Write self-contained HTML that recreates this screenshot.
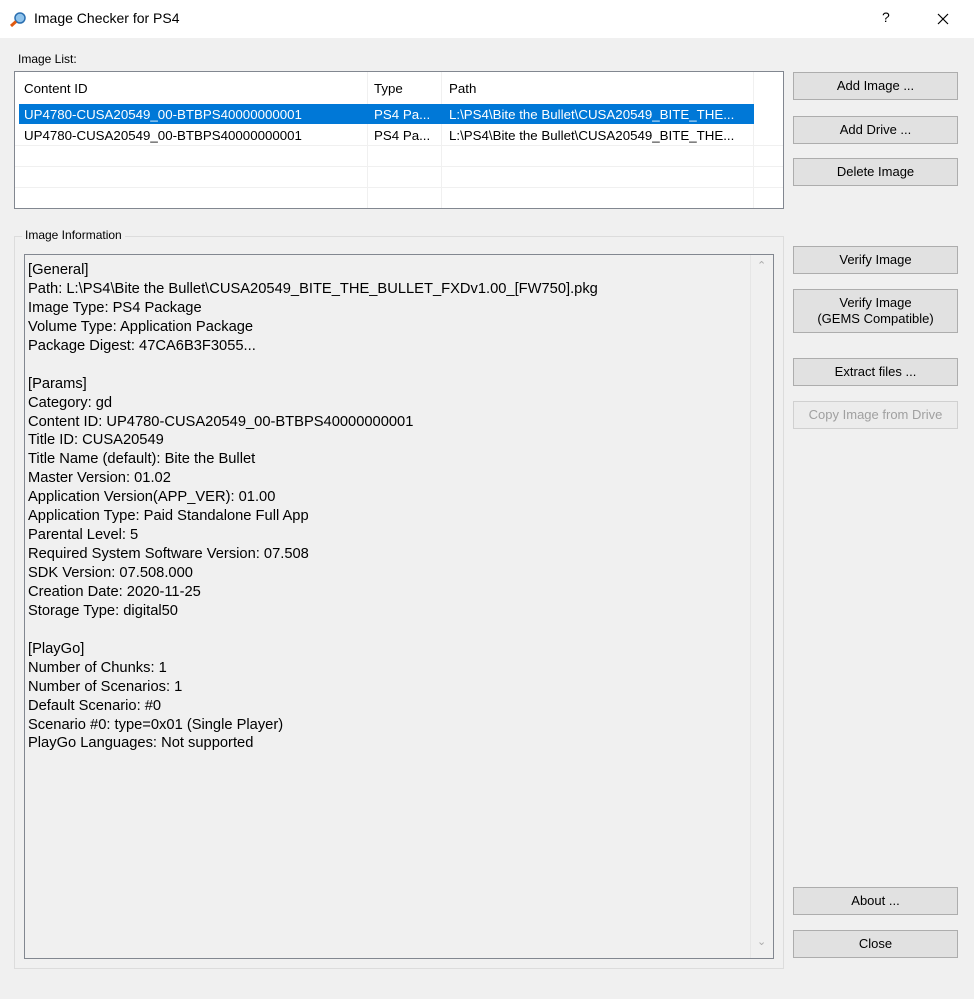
<!DOCTYPE html>
<html><head><style>
*{margin:0;padding:0;box-sizing:border-box}
body{width:974px;height:999px;background:#f0f0f0;font-family:"Liberation Sans",sans-serif;font-size:12px;color:#000;position:relative;overflow:hidden}
.abs{position:absolute}
.title{left:0;top:0;width:974px;height:38px;background:#fff}
.btn{position:absolute;left:793px;width:165px;height:28px;background:#e1e1e1;border:1px solid #adadad;text-align:center;font-size:13px;line-height:26px;color:#000}
.hl{position:absolute;height:1px;background:#f0f0f0}
.vl{position:absolute;width:1px;background:#f0f0f0}
.cell{position:absolute;font-size:13.3px;white-space:nowrap;overflow:hidden}
</style></head><body>
<div class="abs title">
 <svg class="abs" style="left:9px;top:11px" width="18" height="16" viewBox="0 0 18 16"><circle cx="11" cy="7" r="5" fill="#8fc3ec" stroke="#2b6fb0" stroke-width="1.5"/><line x1="7" y1="10.5" x2="2" y2="15" stroke="#e05a10" stroke-width="3"/></svg>
 <div class="abs" style="left:34px;top:10px;font-size:14px">Image Checker for PS4</div>
 <div class="abs" style="left:882px;top:9px;font-size:14px">?</div>
 <svg class="abs" style="left:937px;top:13px" width="12" height="12"><path d="M1 1L11 11M11 1L1 11" stroke="#000" stroke-width="1.2"/></svg>
</div>
<div class="abs" style="left:18px;top:52px;font-size:12px">Image List:</div>
<div class="abs" style="left:14px;top:71px;width:770px;height:138px;background:#fff;border:1px solid #828790">
 <div class="vl" style="left:352px;top:0;height:136px"></div>
 <div class="vl" style="left:426px;top:0;height:136px"></div>
 <div class="vl" style="left:738px;top:0;height:136px"></div>
 <div class="cell" style="left:9px;top:9px">Content ID</div>
 <div class="cell" style="left:359px;top:9px">Type</div>
 <div class="cell" style="left:434px;top:9px">Path</div>
 <div class="abs" style="left:4px;top:32px;width:735px;height:20px;background:#0078d7"></div>
 <div class="cell" style="left:9px;top:35px;color:#fff">UP4780-CUSA20549_00-BTBPS40000000001</div>
 <div class="cell" style="left:359px;top:35px;color:#fff;width:62px">PS4 Pa...</div>
 <div class="cell" style="left:434px;top:35px;color:#fff;width:300px">L:\PS4\Bite the Bullet\CUSA20549_BITE_THE...</div>
 <div class="cell" style="left:9px;top:56px">UP4780-CUSA20549_00-BTBPS40000000001</div>
 <div class="cell" style="left:359px;top:56px;width:62px">PS4 Pa...</div>
 <div class="cell" style="left:434px;top:56px;width:300px">L:\PS4\Bite the Bullet\CUSA20549_BITE_THE...</div>
 <div class="hl" style="left:0;top:73px;width:768px"></div>
 <div class="hl" style="left:0;top:94px;width:768px"></div>
 <div class="hl" style="left:0;top:115px;width:768px"></div>
</div>
<div class="abs" style="left:14px;top:236px;width:770px;height:733px;border:1px solid #dcdcdc"></div>
<div class="abs" style="left:22px;top:228px;padding:0 3px;background:#f0f0f0;font-size:12px">Image Information</div>
<div class="abs" style="left:24px;top:254px;width:750px;height:705px;border:1px solid #828790;background:#f0f0f0">
 <div class="vl" style="left:725px;top:0;height:703px;background:#e6e6e6"></div>
 <div class="abs" style="left:732px;top:4px;color:#aaa;font-size:11px">&#8963;</div>
 <div class="abs" style="left:732px;top:680px;color:#aaa;font-size:11px">&#8964;</div>
 <div class="abs" style="left:3px;top:6px;font-size:14.7px;line-height:18.93px;white-space:pre">[General]
Path: L:\PS4\Bite the Bullet\CUSA20549_BITE_THE_BULLET_FXDv1.00_[FW750].pkg
Image Type: PS4 Package
Volume Type: Application Package
Package Digest: 47CA6B3F3055...

[Params]
Category: gd
Content ID: UP4780-CUSA20549_00-BTBPS40000000001
Title ID: CUSA20549
Title Name (default): Bite the Bullet
Master Version: 01.02
Application Version(APP_VER): 01.00
Application Type: Paid Standalone Full App
Parental Level: 5
Required System Software Version: 07.508
SDK Version: 07.508.000
Creation Date: 2020-11-25
Storage Type: digital50

[PlayGo]
Number of Chunks: 1
Number of Scenarios: 1
Default Scenario: #0
Scenario #0: type=0x01 (Single Player)
PlayGo Languages: Not supported</div>
</div>
<div class="btn" style="top:72px">Add Image ...</div>
<div class="btn" style="top:116px">Add Drive ...</div>
<div class="btn" style="top:158px">Delete Image</div>
<div class="btn" style="top:246px">Verify Image</div>
<div class="btn" style="top:289px;height:44px;line-height:16px;padding-top:5px">Verify Image<br>(GEMS Compatible)</div>
<div class="btn" style="top:358px">Extract files ...</div>
<div class="btn" style="top:401px;background:#ececec;border-color:#d0d0d0;color:#a0a0a0">Copy Image from Drive</div>
<div class="btn" style="top:887px">About ...</div>
<div class="btn" style="top:930px">Close</div>
</body></html>
